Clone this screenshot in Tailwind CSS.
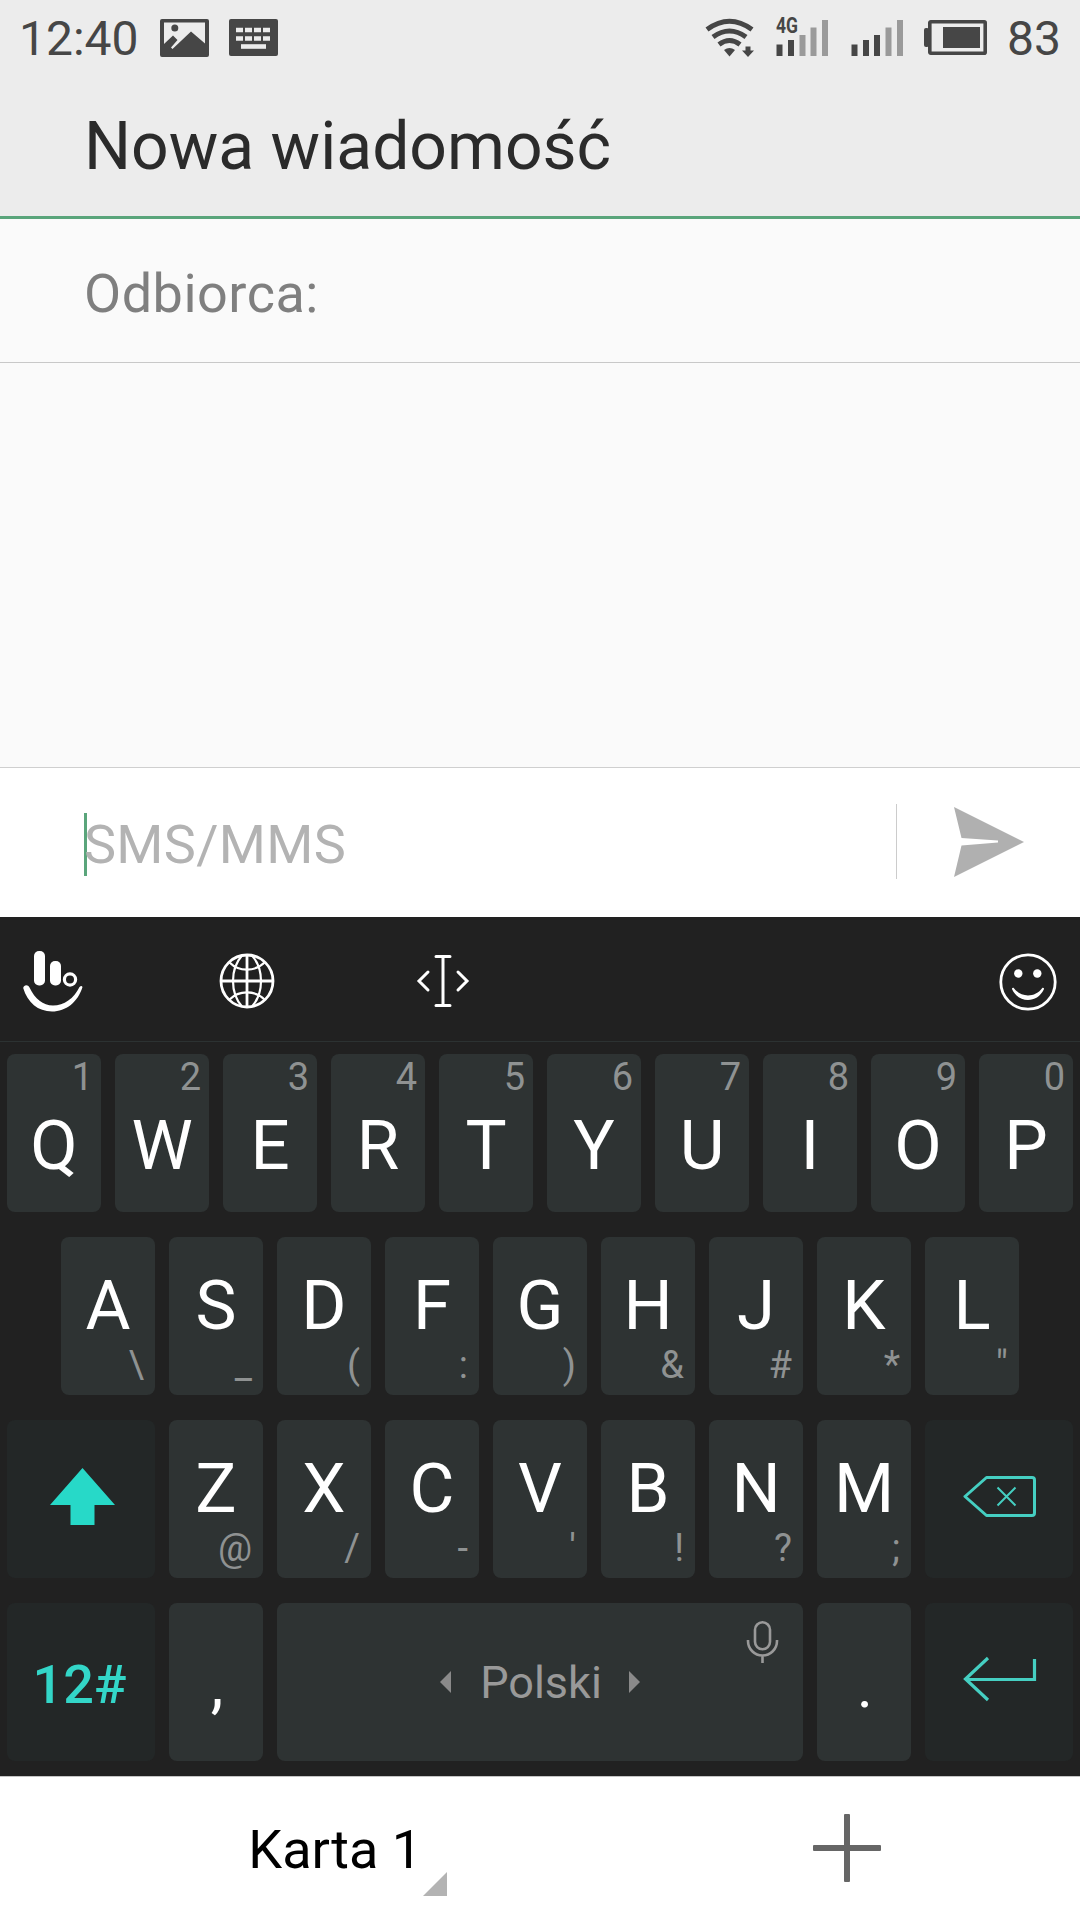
<!DOCTYPE html>
<html lang="pl">
<head>
  <meta charset="UTF-8">
  <meta name="viewport" content="width=device-width, initial-scale=1.0">
  <title>Nowa wiadomość</title>
  <script src="https://cdn.jsdelivr.net/npm/@tailwindcss/browser@4"></script>
</head>
<body class="w-[1080px] h-[1920px] overflow-hidden flex flex-col bg-[#fafafa] font-[Roboto,sans-serif]">

  <!-- Header -->
  <header class="h-[219px] shrink-0 bg-[#ececec] border-b-3 border-[#5aa57b]">

    <!-- Status bar -->
    <div class="h-[78px] flex items-center justify-between pl-[19px] pr-[19px] text-[#464646]">
      <div class="flex items-center">
        <span class="w-[141px] text-[48px] leading-[78px]">12:40</span>
        <svg class="w-[49px] h-[38px] -mt-[2px]" viewBox="0 0 49 38" fill="currentColor">
          <path fill-rule="evenodd" d="M2 0H47Q49 0 49 2V36Q49 38 47 38H2Q0 38 0 36V2Q0 0 2 0ZM4 3.500V25L13 16.500L17.500 21L11 28.500L12.500 30L31 12.500L45 24.500V3.500Z"/>
          <circle cx="14.800" cy="9" r="3.500"/>
        </svg>
        <svg class="w-[49px] h-[37px] ml-5 -mt-[3px]" viewBox="0 0 49 37">
          <rect width="49" height="37" rx="2" fill="currentColor"/>
          <path d="M7 11H41M7 19.500H41" stroke="#ececec" stroke-width="4.600" stroke-dasharray="7 2"/>
          <path d="M12 27.500H37" stroke="#ececec" stroke-width="4.600"/>
        </svg>
      </div>
      <div class="flex items-center">
        <svg class="w-[49px] h-[40px] -mt-[3px]" viewBox="0 0 49 40" fill="none" stroke="currentColor" stroke-width="5">
          <path d="M2 11.500Q24.500 -5 47 11.500M8 19Q24.500 7 41 19M14 26.500Q24.500 18.500 35 26.500"/>
          <path d="M19 32Q24.500 28 30 32L24.500 38.500Z" fill="currentColor" stroke="none"/>
          <path d="M40.500 28.500H45.500V32.500H49L43 39L37 32.500H40.500Z" fill="currentColor" stroke="none"/>
        </svg>
        <svg class="w-[52px] h-[52px] ml-[22px] -mt-3" viewBox="0 -8 52 52">
          <text x="0" y="17.500" font-size="22.500" font-weight="700" textLength="22" lengthAdjust="spacingAndGlyphs" fill="currentColor">4G</text>
          <path d="M0.500 29.500h6V41h-6zM12 25h6V41h-6z" fill="currentColor"/>
          <path d="M23.500 20h6V41h-6zM34.500 12.500h6V41h-6zM46 5h6V41h-6z" fill="#9a9a9a"/>
        </svg>
        <svg class="w-[52px] h-[44px] ml-[23px] -mt-1" viewBox="0 0 52 44">
          <path d="M0.500 29.500h6V41h-6zM12 25h6V41h-6zM23 20h6V41h-6z" fill="currentColor"/>
          <path d="M34.500 12.500h6V41h-6zM46 5h6V41h-6z" fill="#9a9a9a"/>
        </svg>
        <svg class="w-[63px] h-[35px] ml-[21px] -mt-[3px]" viewBox="0 0 63 35" fill="currentColor">
          <rect x="5.800" y="1.800" width="55.400" height="31.400" rx="1" fill="none" stroke="currentColor" stroke-width="3.600"/>
          <rect x="0" y="8" width="5" height="19" rx="2"/>
          <rect x="19" y="7" width="37" height="21"/>
        </svg>
        <span class="ml-[20px] text-[48px] leading-[78px]">83</span>
      </div>
    </div>

    <h1 class="pl-[84px] text-[66px] leading-[138px] text-[#2b2b2b]">Nowa wiadomość</h1>
  </header>

  <!-- Recipient -->
  <div class="h-[144px] shrink-0 pl-[84px] border-b-1 border-[#c8c8c8] text-[54px] leading-[149px] tracking-[0.5px] text-[#7f7f7f]">Odbiorca:</div>

  <!-- Conversation -->
  <main class="grow"></main>

  <!-- Message input -->
  <div class="h-[150px] shrink-0 flex items-center bg-white border-t-1 border-[#cfcfcf]">
    <div class="ml-[84px] w-[3px] h-[63px] mt-[3px] bg-[#5aa57b]"></div>
    <div class="w-[808px] -ml-[3px] pt-[4px] text-[54px] leading-[146px] tracking-[0.3px] text-[#b3b3b3]">SMS/MMS</div>
    <div class="w-px h-[75px] bg-[#cccccc] -mt-[3px] ml-[4px]"></div>
    <svg class="w-[70px] h-[70px] ml-[57px] -mt-[2px]" viewBox="0 0 70 70" fill="#b0b0b0">
      <path d="M0 0L70 35L0 70L7.500 38.500L44 35.500V33.500L7.500 31Z"/>
    </svg>
  </div>

  <!-- Keyboard -->
  <section class="h-[859px] shrink-0 bg-[#212121]">
    <div class="h-[125px] flex items-center justify-between pl-[22px] pr-[23px] border-b-1 border-[#2c3232] text-white">
      <div class="flex items-center">
        <svg class="w-[62px] h-[62px] mt-[4px]" viewBox="0 0 62 62" fill="currentColor">
          <rect x="12" y="1" width="11" height="34.500" rx="5"/>
          <rect x="28" y="11" width="11" height="24.500" rx="5"/>
          <circle cx="48" cy="29.500" r="5.600" fill="none" stroke="currentColor" stroke-width="3.200"/>
          <path d="M1.200 38C2 34.500 6 34.500 7.500 37.500C13 49 21 55.500 31 55.500C42 55.500 52 48.500 57.500 37Q59.500 35 60.500 37C56 52 44 61.500 30 61.500C16 61.500 5.500 52.500 1.200 38Z"/>
        </svg>
        <svg class="w-[56px] h-[56px] ml-[135px] mt-[3px]" viewBox="0 0 56 56" fill="none" stroke="currentColor" stroke-width="2.800">
          <circle cx="28" cy="28" r="26"/>
          <path d="M28 2V54M2 28H54"/>
          <path d="M23 2.500C11 16 11 40 23 53.500M33 2.500C45 16 45 40 33 53.500M10.500 9.500C20 19 36 19 45.500 9.500M10.500 46.500C20 37 36 37 45.500 46.500" stroke-width="2.200"/>
        </svg>
        <svg class="w-[54px] h-[54px] ml-[141px] mt-[3px]" viewBox="0 0 54 54" fill="none" stroke="currentColor" stroke-width="3" stroke-linecap="round">
          <path d="M20 2.500H34M20 51.500H34M27 2.500V51.500M12 18L3 27L12 36M42 18L51 27L42 36"/>
        </svg>
      </div>
      <svg class="w-[58px] h-[58px] mt-[5px]" viewBox="0 0 58 58" fill="currentColor">
        <circle cx="29" cy="29" r="27.200" fill="none" stroke="currentColor" stroke-width="2.800"/>
        <circle cx="19.300" cy="20.500" r="4.200"/>
        <circle cx="38.300" cy="20.500" r="4.200"/>
        <path d="M14.500 34.700C22 45 36 45 43.500 34.700Q45.500 34.500 44.800 36.500C38 50.500 20 50.500 13.200 36.500Q12.500 34.500 14.500 34.700Z"/>
      </svg>
    </div>

    <div class="flex flex-col gap-[25px] px-[7px] pt-3">
      <div id="rowTop" class="flex gap-[14px]"></div>
      <div id="rowHome" class="flex gap-[14px] justify-center"></div>

      <div class="flex gap-[14px]">
        <div class="w-[148px] h-[158px] rounded-lg bg-[#232727] flex justify-center">
          <svg class="w-[65px] h-[57px] mt-12 ml-[2px]" viewBox="0 0 65 57" fill="#27d9c8">
            <path d="M32.500 0L65 37H44.500V57H20.500V37H0Z"/>
          </svg>
        </div>
        <div id="rowBottom" class="flex gap-[14px]"></div>
        <div class="w-[148px] h-[158px] rounded-lg bg-[#232727] flex justify-center">
          <svg class="w-[73px] h-[41px] mt-14 ml-px" viewBox="0 0 73 41" fill="none" stroke="#45cfc2" stroke-width="3">
            <path d="M2 20.500L23.500 1.500H69Q71.500 1.500 71.500 4V37Q71.500 39.500 69 39.500H23.500Z" stroke-linejoin="round"/>
            <path d="M34.500 11.500L52.500 29.500M52.500 11.500L34.500 29.500" stroke-width="2"/>
          </svg>
        </div>
      </div>

      <div class="flex gap-[14px]">
        <div class="w-[148px] h-[158px] rounded-lg bg-[#232727] text-[#33d6c8] text-[54px] font-medium leading-[163px] text-center pr-[3px]">12#</div>
        <div class="w-[94px] h-[158px] rounded-lg bg-[#2e3333] text-white text-[64px] leading-[164px] text-center pl-[2px]">,</div>
        <div class="relative w-[526px] h-[158px] rounded-lg bg-[#2e3333] flex items-center justify-center text-[#999999]">
          <svg class="w-[11px] h-[22px]" viewBox="0 0 11 22" fill="#8a8a8a"><path d="M11 0V22L0 11Z"/></svg>
          <span class="w-[178px] text-center text-[45px] leading-[158px] pt-[2px] pl-[2px]">Polski</span>
          <svg class="w-[11px] h-[22px]" viewBox="0 0 11 22" fill="#8a8a8a"><path d="M0 0V22L11 11Z"/></svg>
          <svg class="absolute top-[17px] right-[24px] w-[33px] h-[44px]" viewBox="0 0 33 44" fill="none" stroke="currentColor" stroke-width="2.600">
            <rect x="9" y="2.300" width="15" height="27" rx="7.500"/>
            <path d="M2 20V21A14.500 14.500 0 0 0 31 21V20M16.500 35.500V43"/>
          </svg>
        </div>
        <div class="w-[94px] h-[158px] rounded-lg bg-[#2e3333] text-white text-[60px] leading-[167px] text-center pl-[2px]">.</div>
        <div class="w-[148px] h-[158px] rounded-lg bg-[#232727] flex justify-center">
          <svg class="w-[74px] h-[46px] mt-[53px] ml-[2px]" viewBox="0 0 74 46" fill="none" stroke="#45cfc2" stroke-width="3.200">
            <path d="M25 2L2.500 23L25 44M2.500 23.500H71.500V3"/>
          </svg>
        </div>
      </div>
    </div>
  </section>

  <!-- Bottom bar -->
  <footer class="h-[144px] shrink-0 flex bg-white border-t-1 border-[#c4c4c4]">
    <div class="w-[447px] flex items-end justify-end">
      <span class="text-[54px] leading-[141px] text-black mr-px">Karta 1</span>
      <svg class="w-6 h-6 mb-6" viewBox="0 0 24 24" fill="#b3b3b3"><path d="M24 0V24H0Z"/></svg>
    </div>
    <svg class="w-[68px] h-[68px] ml-[366px] mt-[37px]" viewBox="0 0 68 68" fill="#666666">
      <rect x="31" width="6" height="68" rx="1"/>
      <rect y="31" width="68" height="6" rx="1"/>
    </svg>
  </footer>

  <script>
    // Each key is a pair: letter, long-press symbol
    const topKeys = ['Q1', 'W2', 'E3', 'R4', 'T5', 'Y6', 'U7', 'I8', 'O9', 'P0'];
    const homeKeys = ['A\\', 'S_', 'D(', 'F:', 'G)', 'H&', 'J#', 'K*', 'L"'];
    const bottomKeys = ['Z@', 'X/', 'C-', "V'", 'B!', 'N?', 'M;'];

    function addPart(key, text, className) {
      const part = document.createElement('div');
      part.className = className;
      part.textContent = text;
      key.appendChild(part);
    }

    function addKeys(rowId, keys, hintOnTop) {
      const row = document.getElementById(rowId);
      keys.forEach(([letter, hint]) => {
        const key = document.createElement('div');
        key.className = 'w-[94px] h-[158px] rounded-lg bg-[#2e3333]';
        if (hintOnTop) {
          addPart(key, hint, 'pr-2 text-right text-[38px] leading-[46px] text-[#8f9292]');
          addPart(key, letter, 'text-center text-[69px] leading-[91px] text-white');
        } else {
          addPart(key, letter, 'pt-[29px] text-center text-[69px] leading-[79px] text-white');
          addPart(key, hint, 'pr-[11px] text-right text-[38px] leading-[40px] text-[#8f9292]');
        }
        row.appendChild(key);
      });
    }

    addKeys('rowTop', topKeys, true);
    addKeys('rowHome', homeKeys, false);
    addKeys('rowBottom', bottomKeys, false);
  </script>
</body>
</html>
